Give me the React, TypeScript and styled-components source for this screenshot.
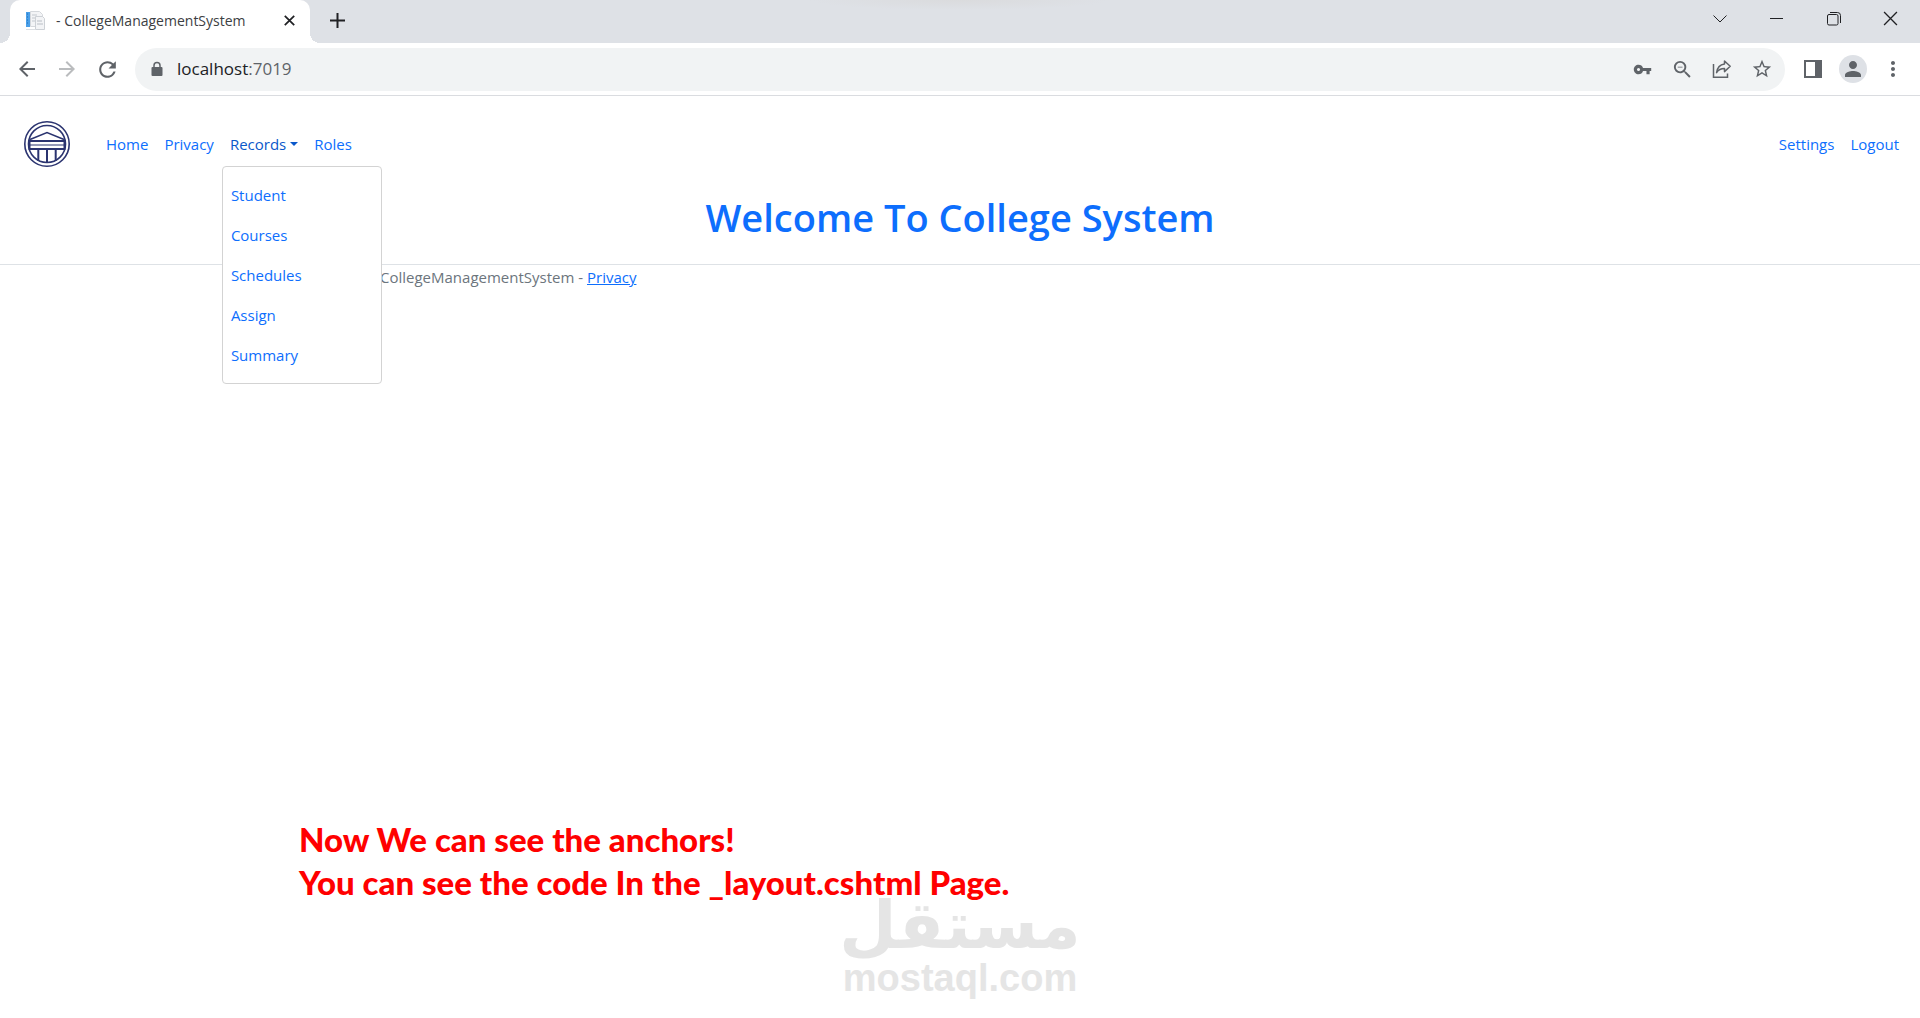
import React from "react";
import styled, { createGlobalStyle } from "styled-components";
import {
  MdArrowBack,
  MdArrowForward,
  MdRefresh,
  MdVpnKey,
  MdZoomOut,
  MdStarBorder,
  MdPerson,
  MdMoreVert,
} from "react-icons/md";

const GlobalStyle = createGlobalStyle`
  *, *::before, *::after { box-sizing: border-box; }
  body {
    margin: 0;
    background: #fff;
    font-family: "Open Sans", "Noto Sans", sans-serif;
    font-size: 15px;
    line-height: 24px;
    color: #212529;
  }
`;

/* ---------- browser window ---------- */

const Window = styled.div`
  position: relative;
  display: flex;
  flex-direction: column;
  min-height: 100vh;
`;

const TabStrip = styled.div`
  display: flex;
  align-items: stretch;
  height: 43px;
  padding-left: 10px;
  background: radial-gradient(ellipse 150px 10px at 50% 0, #dadbdd, #dee1e6);
`;

const Tab = styled.div`
  position: relative;
  display: flex;
  align-items: center;
  gap: 10px;
  width: 300px;
  padding: 0 10px 2px 15px;
  border-radius: 10px 10px 0 0;
  background: #fff;
  color: #3c4043;
  font-size: 14px;

  &::before,
  &::after {
    content: "";
    position: absolute;
    bottom: 0;
    width: 10px;
    height: 10px;
  }
  &::before {
    right: 100%;
    background: radial-gradient(circle at 0 0, transparent 10px, #fff 10px);
  }
  &::after {
    left: 100%;
    background: radial-gradient(circle at 100% 0, transparent 10px, #fff 10px);
  }
`;

const TabTitle = styled.span`
  flex: 1;
  white-space: nowrap;
`;

const IconButton = styled.button<{ $width?: number; $color?: string }>`
  display: flex;
  flex: none;
  align-items: center;
  justify-content: center;
  width: ${(p) => p.$width ?? 40}px;
  height: 40px;
  padding: 0;
  border: 0;
  background: none;
  color: ${(p) => p.$color ?? "#5f6368"};
`;

const WindowControls = styled.div`
  display: flex;
  align-items: center;
  margin-left: auto;
  padding-right: 1px;
  height: 37px;
`;

const Toolbar = styled.div`
  display: flex;
  align-items: center;
  height: 53px;
  padding: 0 7px;
  border-bottom: 1px solid #dadce0;
`;

const AddressBar = styled.div`
  display: flex;
  flex: 1;
  align-items: center;
  height: 43px;
  margin: 0 8px;
  padding: 0 3px 0 14px;
  border-radius: 22px;
  background: #f1f3f4;
  color: #5f6368;
`;

const Address = styled.div`
  flex: 1;
  padding-left: 12px;
  font-size: 17px;
  color: #5f6368;

  strong {
    font-weight: 400;
    color: #202124;
  }
`;

const Avatar = styled.span`
  display: flex;
  align-items: center;
  justify-content: center;
  width: 28px;
  height: 28px;
  border-radius: 50%;
  background: #dee1e6;
`;

/* ---------- page ---------- */

const Navbar = styled.nav`
  display: flex;
  align-items: center;
  height: 96px;
  padding: 0 13px 0 24px;
`;

const Brand = styled.a`
  display: flex;
  margin-right: 28px;
`;

const NavItem = styled.div`
  position: relative;
`;

const NavLink = styled.a`
  display: block;
  padding: 8px;
  color: #0d6efd;
  text-decoration: none;
`;

const NavToggle = styled.button`
  display: flex;
  align-items: center;
  gap: 4px;
  padding: 8px;
  border: 0;
  background: none;
  color: #0a58ca;
  font: inherit;

  &::after {
    content: "";
    border: 4px solid transparent;
    border-top-color: currentColor;
    border-bottom: 0;
  }
`;

const NavEnd = styled.div`
  display: flex;
  margin-left: auto;
`;

const Menu = styled.div`
  position: absolute;
  z-index: 1;
  top: 100%;
  left: 0;
  width: 160px;
  margin-top: 2px;
  padding: 8px 0;
  border: 1px solid #d3d3d3;
  border-radius: 4px;
  background: #fff;
`;

const Title = styled.h1`
  margin: 0;
  padding: 1px 0 23px;
  text-align: center;
  font-size: 38px;
  font-weight: 600;
  line-height: 48px;
  color: #0d6efd;
`;

const Footer = styled.footer`
  border-top: 1px solid #dee2e6;
  color: #6c757d;
`;

const Container = styled.div`
  max-width: 1320px;
  margin: 0 auto;
  padding: 0 80px;

  a {
    color: #0d6efd;
  }
`;

/* ---------- overlays ---------- */

const Watermark = styled.div`
  position: absolute;
  left: 50%;
  bottom: 18px;
  transform: translateX(-50%);
  text-align: center;
  font-family: "Liberation Sans", Arial, sans-serif;
  font-size: 38px;
  font-weight: 700;
  line-height: 44px;
  color: #e5e5e5;
`;

const WatermarkScript = styled.div`
  font-family: "DejaVu Sans", sans-serif;
  font-size: 66px;
  line-height: 60px;
`;

const Note = styled.p`
  position: absolute;
  left: 299px;
  bottom: 114px;
  margin: 0;
  font-family: Lato, sans-serif;
  font-size: 33px;
  font-weight: 900;
  line-height: 43px;
  color: #f00;
`;

/* ---------- drawings ---------- */

const Favicon = () => (
  <svg width="21" height="21" viewBox="0 0 21 21">
    <rect x="1" y="2" width="4" height="15" fill="#4a9fe8" />
    <path d="M2 4h1M2 7h1M2 10h1M2 13h1" stroke="#1b6cb8" />
    <path d="M5.500 1.500h9l3 3v12h-12z" fill="#f3f4f6" stroke="#d5d8dc" />
    <path d="M7 5h5M7 8h4M7 11h3" stroke="#c3c8ce" />
    <path d="M10.500 6.500h7l2 2v11h-9z" fill="#f3f4f6" stroke="#cdd1d6" />
    <path d="M12 11h5M12 14h6" stroke="#b9bec5" />
    <path d="M1 19.500h9" stroke="#dcdfe3" />
  </svg>
);

const Cross = ({ size, stroke = 1 }: { size: number; stroke?: number }) => (
  <svg width={size} height={size} viewBox="0 0 14 14">
    <path d="M1 1l12 12M13 1L1 13" stroke="#202124" strokeWidth={stroke} />
  </svg>
);

const Share = () => (
  <svg width="20" height="20" viewBox="0 0 20 20" fill="none" stroke="#5f6368" strokeWidth="1.500">
    <path d="M1.500 5v13.200h14V14.500" />
    <path d="M12.500 2l5.700 5.300-5.700 5.300V9.600C9 9.600 6.400 10.800 4.600 13.600 5.200 9 7.800 5.700 12.500 5z" strokeLinejoin="round" />
  </svg>
);

const SidePanel = () => (
  <svg width="18" height="18" viewBox="0 0 18 18">
    <path fill="#5f6368" fillRule="evenodd" d="M0 0h18v18H0zM2 2v14h9V2z" />
  </svg>
);

const Lock = () => (
  <svg width="16" height="16" viewBox="0 0 16 16">
    <rect x="2.500" y="6" width="11" height="9" rx="1" fill="#5f6368" />
    <path d="M5 7V4.500a3 3 0 0 1 6 0V7" fill="none" stroke="#5f6368" strokeWidth="1.500" />
  </svg>
);

const CollegeLogo = () => (
  <svg width="46" height="46" viewBox="0 0 46 46" fill="none" stroke="#2b3470">
    <circle cx="23" cy="23" r="22.200" strokeWidth="1.600" />
    <circle cx="23" cy="23" r="18.500" strokeWidth="1.600" />
    <path d="M6 18.500L23 11.500l17 7" strokeWidth="1.600" />
    <path d="M5 20h36" strokeWidth="2" />
    <path d="M5 24h36" strokeWidth="1" />
    <path d="M5 28h36" strokeWidth="2" />
    <path d="M14.300 28v12M23 28v14M31.700 28v12" strokeWidth="2" />
    <path d="M5.500 19v10M40.500 19v10" strokeWidth="2" />
  </svg>
);

const records = ["Student", "Courses", "Schedules", "Assign", "Summary"];

export default function App() {
  return (
    <Window>
      <GlobalStyle />
      <TabStrip>
        <Tab>
          <Favicon />
          <TabTitle>- CollegeManagementSystem</TabTitle>
          <IconButton $width={22} aria-label="Close tab">
            <Cross size={11} stroke={2.2} />
          </IconButton>
        </Tab>
        <IconButton $width={54} aria-label="New tab">
          <svg width="15" height="15" viewBox="0 0 15 15">
            <path d="M7.500 0v15M0 7.500h15" stroke="#202124" strokeWidth="2" />
          </svg>
        </IconButton>
        <WindowControls>
          <IconButton $width={57} aria-label="Search tabs">
            <svg width="14" height="8" viewBox="0 0 14 8" fill="none">
              <path d="M.5.500L7 7l6.500-6.500" stroke="#202124" />
            </svg>
          </IconButton>
          <IconButton $width={57} aria-label="Minimize">
            <svg width="13" height="1" viewBox="0 0 13 1">
              <path d="M0 .5h13" stroke="#202124" />
            </svg>
          </IconButton>
          <IconButton $width={57} aria-label="Restore">
            <svg width="14" height="14" viewBox="0 0 14 14" fill="none" stroke="#202124">
              <rect x=".5" y="2.500" width="10.500" height="10.500" rx="1.500" />
              <path d="M3 .5h7.500a3 3 0 0 1 3 3v7.500" />
            </svg>
          </IconButton>
          <IconButton $width={57} aria-label="Close window">
            <Cross size={15} stroke={1.2} />
          </IconButton>
        </WindowControls>
      </TabStrip>

      <Toolbar>
        <IconButton aria-label="Back"><MdArrowBack size={24} /></IconButton>
        <IconButton aria-label="Forward" $color="#babcbe"><MdArrowForward size={24} /></IconButton>
        <IconButton aria-label="Reload"><MdRefresh size={25} /></IconButton>
        <AddressBar>
          <Lock />
          <Address><strong>localhost</strong>:7019</Address>
          <IconButton aria-label="Passwords"><MdVpnKey size={19} /></IconButton>
          <IconButton aria-label="Zoom"><MdZoomOut size={23} /></IconButton>
          <IconButton aria-label="Share"><Share /></IconButton>
          <IconButton aria-label="Bookmark"><MdStarBorder size={22} /></IconButton>
        </AddressBar>
        <IconButton aria-label="Side panel"><SidePanel /></IconButton>
        <IconButton aria-label="Profile"><Avatar><MdPerson size={24} /></Avatar></IconButton>
        <IconButton aria-label="Menu"><MdMoreVert size={24} /></IconButton>
      </Toolbar>

      <Navbar>
        <Brand href="#" aria-label="College"><CollegeLogo /></Brand>
        <NavLink href="#">Home</NavLink>
        <NavLink href="#">Privacy</NavLink>
        <NavItem>
          <NavToggle aria-expanded="true">Records</NavToggle>
          <Menu>
            {records.map((name) => (
              <NavLink href="#" key={name}>{name}</NavLink>
            ))}
          </Menu>
        </NavItem>
        <NavLink href="#">Roles</NavLink>
        <NavEnd>
          <NavLink href="#">Settings</NavLink>
          <NavLink href="#">Logout</NavLink>
        </NavEnd>
      </Navbar>

      <Title>Welcome To College System</Title>

      <Footer>
        <Container>
          CollegeManagementSystem - <a href="#">Privacy</a>
        </Container>
      </Footer>

      <Watermark>
        <WatermarkScript lang="ar" dir="rtl">مستقل</WatermarkScript>
        mostaql.com
      </Watermark>
      <Note>
        Now We can see the anchors!
        <br />
        You can see the code In the _layout.cshtml Page.
      </Note>
    </Window>
  );
}
